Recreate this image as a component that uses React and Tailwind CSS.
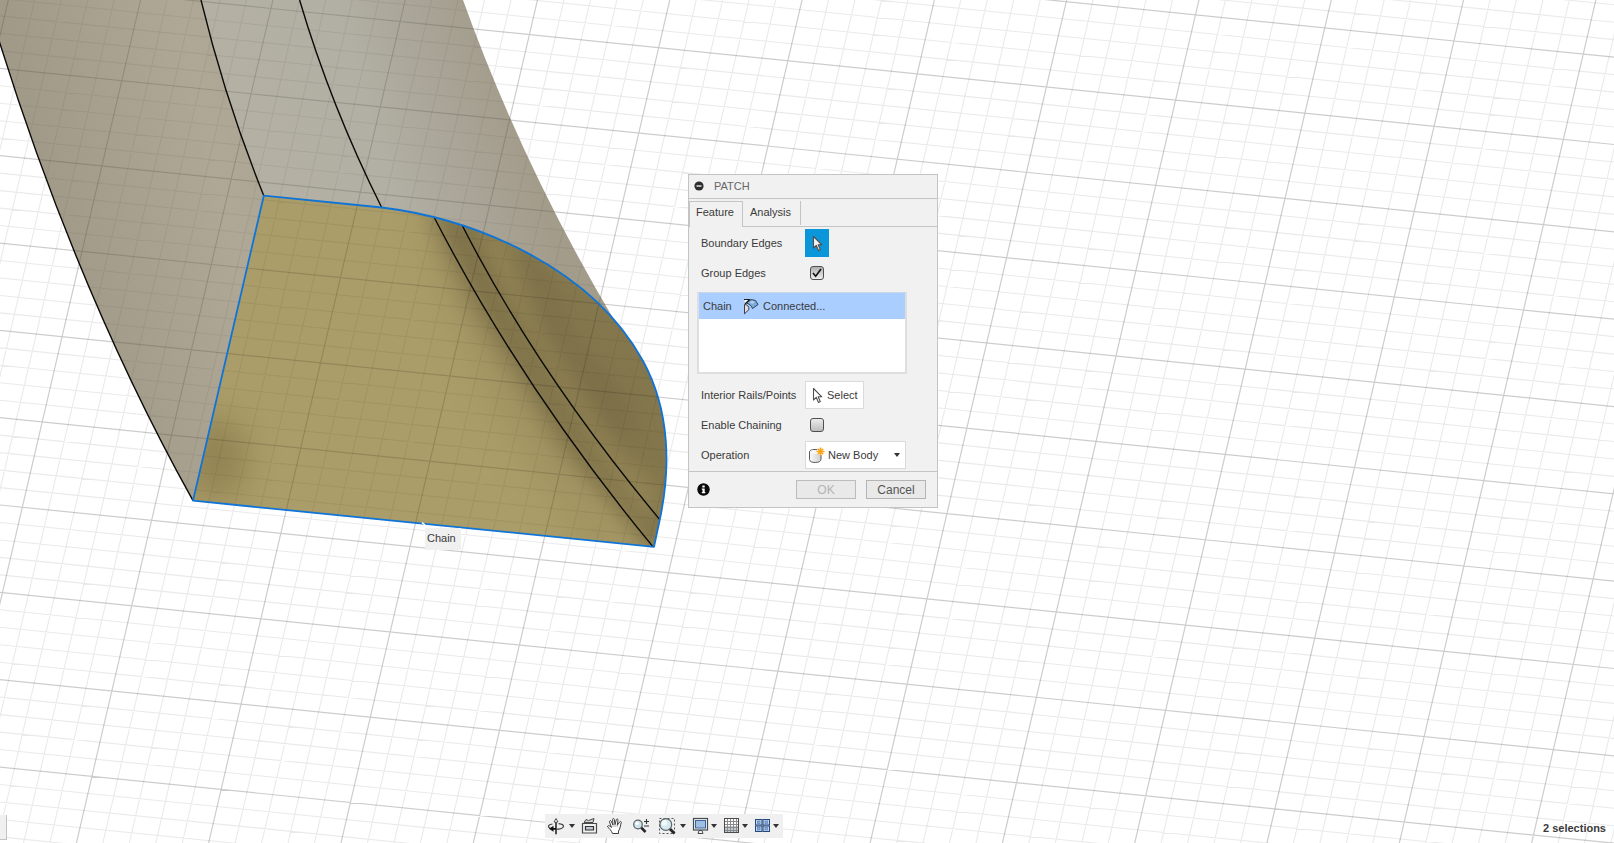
import React, { useState } from "react";

/* ---------- model geometry ---------- */

const silhouetteLeft = "M-12 4L0 43.6Q79 296 193 500.7";
const edgeInner = "M201 0Q225 99.500 263.800 195.700";
const edgeMiddle = "M299.600 0Q330.700 105.500 381.700 207.500";
const creaseA = "M434 217Q522 388 652.700 546.400";
const creaseB = "M462 225Q538 374 659.800 519.600";

const patchPath =
  "M263.800 195.700L381.700 207.500C471.700 218.500 590 265 642.900 360.700C671 412 670.300 470.600 659.800 519.600L654 546.800L193 500.700Z";
const sidePath = "M-12 0V4L0 43.600Q79 296 193 500.700L263.800 195.700Q225 99.500 201 0Z";
const topPath = "M201 0Q225 99.500 263.800 195.700L381.700 207.500L616 323.200Q523.500 168 463 0Z";

const ORIGIN = [131.7, 605.7];
const U = [129.24, 13.09];
const V = [-19.89, 85.32];

function gridPath(keep) {
  let d = "";
  const at = (m, n) =>
    `${(ORIGIN[0] + m * U[0] + n * V[0]).toFixed(1)} ${(ORIGIN[1] + m * U[1] + n * V[1]).toFixed(1)}`;
  for (let i = -60; i <= 100; i++) {
    if (!keep(i)) continue;
    d += `M${at(i / 5, -14)}L${at(i / 5, 8)}M${at(-6, i / 5)}L${at(16, i / 5)}`;
  }
  return d;
}
const majorGrid = gridPath((i) => i % 5 === 0);
const minorGrid = gridPath((i) => i % 5 !== 0);

function GridLines() {
  return (
    <>
      <path d={minorGrid} fill="none" stroke="#000" strokeOpacity="0.085" strokeWidth="1.1" />
      <path d={majorGrid} fill="none" stroke="#000" strokeOpacity="0.2" strokeWidth="1.2" />
    </>
  );
}

function Viewport() {
  return (
    <svg className="absolute inset-0 h-full w-full" viewBox="0 0 1614 843" preserveAspectRatio="xMinYMin slice" aria-hidden="true">
      <defs>
        <linearGradient id="side" gradientUnits="userSpaceOnUse" x1="30" y1="120" x2="240" y2="70">
          <stop offset="0" stopColor="#a29a89" />
          <stop offset="0.8" stopColor="#b0a897" />
          <stop offset="1" stopColor="#aea695" />
        </linearGradient>
        <linearGradient id="top" gradientUnits="userSpaceOnUse" x1="230" y1="90" x2="500" y2="10">
          <stop offset="0" stopColor="#b4b0a4" />
          <stop offset="0.45" stopColor="#b2afa4" />
          <stop offset="0.7" stopColor="#aaa598" />
          <stop offset="0.95" stopColor="#a39c8b" />
        </linearGradient>
        <filter id="soft" x="-40%" y="-40%" width="180%" height="180%">
          <feGaussianBlur stdDeviation="11" />
        </filter>
        <filter id="softer" x="-60%" y="-60%" width="220%" height="220%">
          <feGaussianBlur stdDeviation="16" />
        </filter>
        <clipPath id="patchClip">
          <path d={patchPath} />
        </clipPath>
        <clipPath id="modelClip">
          <path d={sidePath} />
          <path d={topPath} />
          <path d={patchPath} />
        </clipPath>
      </defs>
      <GridLines />
      <path d={sidePath} fill="url(#side)" />
      <path d={topPath} fill="url(#top)" />
      <g clipPath="url(#patchClip)">
        <rect x="180" y="180" width="500" height="380" fill="#ab9d69" />
        <path d="M425 205L480 215L690 330L690 520L655 560L640 540L560 455L470 310Z" fill="#84774e" filter="url(#soft)" />
        <path d="M425 200L470 305L560 450L640 560L600 570L500 420L430 270Z" fill="#9b8d5d" opacity="0.6" filter="url(#softer)" />
        <path d="M440 205L455 260L560 425L630 500L650 545L668 530L590 420L500 290L465 205Z" fill="#7b6f49" opacity="0.5" filter="url(#soft)" />
        <path d="M475 225L510 240L545 330L600 410L660 500L652 525L600 455L530 335Z" fill="#968859" opacity="0.95" filter="url(#soft)" />
        <path d="M505 235L530 250L570 340L625 400L640 470L600 430L550 345Z" fill="#746844" opacity="0.55" filter="url(#soft)" />
        <ellipse cx="216" cy="458" rx="32" ry="42" fill="#857849" opacity="0.65" filter="url(#softer)" />
      </g>
      <g clipPath="url(#modelClip)" opacity="0.7">
        <GridLines />
      </g>
      <g fill="none" stroke="#0a0a08" strokeWidth="1.4">
        <path d={silhouetteLeft} />
        <path d={edgeInner} />
        <path d={edgeMiddle} />
        <path d={creaseA} />
        <path d={creaseB} />
      </g>
      <path d={patchPath} fill="none" stroke="#0f74d6" strokeWidth="1.8" strokeLinejoin="round" />
      <path d="M422 522.500L425 525" stroke="#fff" strokeWidth="1.600" />
    </svg>
  );
}

/* ---------- icons ---------- */

function Cursor({ outline, fill }) {
  return (
    <svg width="11" height="17" viewBox="0 0 11 17" aria-hidden="true">
      <path d="M1.5 1.5V13L4.3 10.4L6.5 15.5L8.3 14.6L6.2 9.8H9.8Z" fill={fill} stroke={outline} strokeWidth="1.1" strokeLinejoin="round" />
    </svg>
  );
}

function ChainIcon() {
  return (
    <svg width="16" height="17" viewBox="0 0 16 17" aria-hidden="true">
      <path d="M3.500 5L8 1.500L12.500 2.500L15 6.500L9.500 10.500C8.500 8 6.500 6 3.500 5Z" fill="#7eaad6" stroke="#23415f" strokeWidth="1" strokeLinejoin="round" />
      <path d="M6.500 4.500L9 2.800L12 3.500L9.500 6Z" fill="#b4d0ea" />
      <path d="M1.500 6.500C4.500 6.500 6 8.500 6 11.500L1.500 15.800Z" fill="#dcdcdc" stroke="#3d3d3d" strokeWidth="1" strokeLinejoin="round" />
      <path d="M1.500 1.500H6.500L2 5.500Z" fill="#fff" />
      <path d="M1 1.500H7M6.500 1.500L2 6" fill="none" stroke="#1d1d1d" strokeWidth="1.1" />
    </svg>
  );
}

function BodyIcon() {
  return (
    <svg width="17" height="17" viewBox="0 0 17 17" aria-hidden="true">
      <defs>
        <linearGradient id="body" x1="0" y1="0" x2="1" y2="0">
          <stop offset="0" stopColor="#fafafa" />
          <stop offset="1" stopColor="#cfcfcf" />
        </linearGradient>
      </defs>
      <path d="M1.500 5Q1.500 2.500 7 2.500T13 5V12.500Q12.500 15.500 7.200 15.500T1.500 12.500Z" fill="url(#body)" stroke="#5a5a5a" strokeWidth="1" />
      <ellipse cx="7" cy="5" rx="4.800" ry="1.900" fill="#f7f7f7" />
      <circle cx="12.500" cy="4.500" r="3.600" fill="#fff" />
      <path d="M12.500 0.500V8.500M8.500 4.500H16.500M9.800 1.800L15.200 7.200M15.200 1.800L9.800 7.200" stroke="#f9a51a" strokeWidth="1.500" />
    </svg>
  );
}

function Caret() {
  return (
    <svg width="6" height="4" viewBox="0 0 6 4" aria-hidden="true">
      <path d="M0 0H6L3 4Z" fill="#333" />
    </svg>
  );
}

function OrbitIcon() {
  return (
    <svg width="18" height="18" viewBox="0 0 18 18" aria-hidden="true" fill="none" stroke="#3c3c3c" strokeWidth="1.2">
      <path d="M5.500 7C3 7.400 1.500 8.200 1.500 9.300C1.500 11 5 12.200 9 12.200C13 12.200 16.500 11 16.500 9.300C16.500 8 14.500 7 11.500 6.700" />
      <path d="M8.500 17V5H7L9 1.500L11 5H9.500V17Z" fill="#fff" strokeWidth="0.900" />
      <path d="M2 11.800L6.500 8.800V11H9V12.600H6.500V14.800Z" fill="#111" stroke="none" />
    </svg>
  );
}

function LookAtIcon() {
  return (
    <svg width="17" height="18" viewBox="0 0 17 18" aria-hidden="true" fill="none" stroke="#4a4a4a" strokeWidth="1.2">
      <path d="M3 5.500L5 2.500L7.500 3.500L13 1.500L12 5.500Z" fill="#d4d4d4" strokeWidth="1" />
      <path d="M1.500 6.500H15.500V16H1.500Z" fill="#f2f2f2" />
      <path d="M4.500 9.500H12.500V13H4.500Z" fill="#c3c9d1" stroke="#333" />
    </svg>
  );
}

function HandIcon() {
  return (
    <svg width="18" height="18" viewBox="0 0 18 18" aria-hidden="true">
      <path
        d="M6.500 16.500C5.500 14 3.500 11.500 1.500 9.800C1.500 8.500 3 8.300 4 9.200L5.500 10.600L3.500 4.800C3.300 3.500 4.800 3.100 5.300 4.300L7 8L6.600 2.500C6.600 1.200 8.200 1.200 8.400 2.500L9 7.700L10.300 2.700C10.700 1.500 12.200 1.800 12 3.100L11.300 8.300L13.700 4.900C14.500 4 15.700 4.800 15.200 5.900C14.200 8.300 14.500 11.500 12.500 14V16.500Z"
        fill="#fff"
        stroke="#3f3f3f"
        strokeWidth="1"
        strokeLinejoin="round"
      />
      <path d="M7 8V10M9 8V10M11.300 8.300V10" stroke="#9a9a9a" strokeWidth="0.800" />
    </svg>
  );
}

function ZoomIcon() {
  return (
    <svg width="18" height="18" viewBox="0 0 18 18" aria-hidden="true">
      <path d="M8.800 10.200L13.500 15" stroke="#262626" strokeWidth="2.600" />
      <circle cx="6" cy="7.500" r="4.300" fill="#cfe4ea" stroke="#5b6367" strokeWidth="1.200" />
      <circle cx="5" cy="6.300" r="1.800" fill="#fff" />
      <path d="M12 4.500H17M14.500 2V7M12 9H17" stroke="#333" strokeWidth="1.100" />
    </svg>
  );
}

function FitIcon() {
  return (
    <svg width="18" height="18" viewBox="0 0 18 18" aria-hidden="true">
      <rect x="1.500" y="1.500" width="15" height="15" fill="none" stroke="#555" strokeDasharray="2 2" />
      <path d="M11.500 11.500L16.500 16.500" stroke="#262626" strokeWidth="2.800" />
      <circle cx="7.800" cy="7.500" r="5.900" fill="#d5e9ee" stroke="#5b6367" strokeWidth="1.200" />
      <circle cx="6.500" cy="6" r="2.800" fill="#f6fbfc" />
    </svg>
  );
}

function DisplayIcon() {
  return (
    <svg width="17" height="18" viewBox="0 0 17 18" aria-hidden="true">
      <rect x="1.500" y="1.500" width="14" height="11.500" fill="#f4f4f4" stroke="#454a52" strokeWidth="1.200" />
      <rect x="3.500" y="3.500" width="10" height="7.500" fill="#9dbfe4" stroke="#3c6496" />
      <path d="M7 13.500L6 16.500H11L10 13.500Z" fill="#eee" stroke="#454a52" />
    </svg>
  );
}

function GridIcon() {
  return (
    <svg width="17" height="18" viewBox="0 0 17 18" aria-hidden="true">
      <rect x="1" y="1" width="15" height="15" fill="#fff" />
      <rect x="1" y="9" width="15" height="7" fill="#c3ccd6" />
      <path d="M4.500 1V16M7.500 1V16M10.500 1V16M13.500 1V16M1 4.500H16M1 7.500H16M1 10.500H16M1 13.500H16" stroke="#8a8a8a" strokeWidth="1" />
      <rect x="1.500" y="1.500" width="14" height="14" fill="none" stroke="#4a4a4a" />
    </svg>
  );
}

function ViewportsIcon() {
  return (
    <svg width="17" height="18" viewBox="0 0 17 18" aria-hidden="true" stroke="#274a7d">
      {[[1.5, 2.5], [9, 2.5], [1.5, 9], [9, 9]].map(([x, y]) => (
        <g key={`${x}-${y}`}>
          <rect x={x} y={y} width="6.500" height="5.500" fill="#c2d8f0" />
          <rect x={x + 2} y={y + 1.5} width="2.500" height="2.500" fill="#8fb2dc" stroke="#5f86ba" strokeWidth="0.800" />
        </g>
      ))}
    </svg>
  );
}

/* ---------- controls ---------- */

function Row({ label, htmlFor, children }) {
  return (
    <div className="flex h-[30px] items-center pl-3">
      <label htmlFor={htmlFor} className="w-[104px] shrink-0">
        {label}
      </label>
      {children}
    </div>
  );
}

function Check({ id, checked, onChange }) {
  return (
    <span className="ml-[5px] grid h-[14px] w-[14px]">
      <input
        id={id}
        type="checkbox"
        checked={checked}
        onChange={(e) => onChange(e.target.checked)}
        className="col-start-1 row-start-1 h-[14px] w-[14px] appearance-none rounded-[3px] border border-[#4f4f4f] bg-linear-to-b from-[#ececec] to-[#bdbdbd] checked:from-[#b0b0b0] checked:to-[#efefef]"
      />
      {checked && (
        <svg className="pointer-events-none col-start-1 row-start-1" width="14" height="14" viewBox="0 0 14 14" aria-hidden="true">
          <path d="M3 7L5.700 10.300L11 3" fill="none" stroke="#111" strokeWidth="1.600" />
        </svg>
      )}
    </span>
  );
}

function PatchDialog() {
  const [group, setGroup] = useState(true);
  const [chaining, setChaining] = useState(false);
  return (
    <section aria-label="Patch" className="absolute top-[174px] left-[688px] w-[250px] border border-[#c4c4c4] bg-[#f1f1f1]">
      <header className="flex h-6 items-center gap-2.5 border-b border-[#c4c4c4] pb-px pl-[5px]">
        <button type="button" aria-label="Collapse" className="flex">
          <svg width="10" height="10" viewBox="0 0 10 10" aria-hidden="true">
            <circle cx="5" cy="5" r="4.600" fill="#2d2d2d" />
            <path d="M2.500 5H7.500" stroke="#f1f1f1" strokeWidth="1.400" />
          </svg>
        </button>
        <h2 className="text-[#666]">PATCH</h2>
      </header>

      <div role="tablist" className="flex h-7 border-b border-[#c4c4c4] pt-0.5">
        <button type="button" role="tab" aria-selected="true" className="-mb-px w-[54px] border-x border-t border-[#c4c4c4] bg-[#f1f1f1] pr-0.5 pb-1.5">
          Feature
        </button>
        <button type="button" role="tab" aria-selected="false" className="mb-px w-[58px] border-r border-[#c4c4c4] pr-0.5 pb-0.5">
          Analysis
        </button>
      </div>

      <div className="pt-px">
        <Row label="Boundary Edges" htmlFor="boundary">
          <button id="boundary" type="button" className="flex h-7 w-6 items-center justify-center bg-[#0a96d8]">
            <Cursor outline="#5b4a40" fill="#f4f4f4" />
          </button>
        </Row>
        <Row label="Group Edges" htmlFor="group">
          <Check id="group" checked={group} onChange={setGroup} />
        </Row>

        <ul className="mt-1 mr-[30px] mb-1.5 ml-2 h-[82px] border-2 border-t border-[#dedede] border-t-[#c8d6e8] bg-white">
          <li className="flex h-[26px] items-center bg-[#aaceff] pl-1">
            <span className="w-10">Chain</span>
            <ChainIcon />
            <span className="pl-1">Connected...</span>
          </li>
        </ul>

        <Row label="Interior Rails/Points" htmlFor="rails">
          <button id="rails" type="button" className="flex h-7 w-[59px] items-center gap-1 border border-[#dadada] bg-white pl-1.5">
            <Cursor outline="#4f4f4f" fill="#fff" />
            Select
          </button>
        </Row>
        <Row label="Enable Chaining" htmlFor="chaining">
          <Check id="chaining" checked={chaining} onChange={setChaining} />
        </Row>
        <Row label="Operation" htmlFor="operation">
          <span className="grid h-7 w-[101px] items-center">
            <select id="operation" className="col-start-1 row-start-1 h-7 w-full appearance-none border border-[#dadada] bg-white pl-[22px]">
              <option>New Body</option>
            </select>
            <span className="pointer-events-none col-start-1 row-start-1 flex items-center justify-between pr-1.5 pl-[3px]">
              <BodyIcon />
              <Caret />
            </span>
          </span>
        </Row>
      </div>

      <footer className="mt-px flex h-9 items-center border-t border-[#c4c4c4] pr-[11px] pl-2">
        <svg width="13" height="13" viewBox="0 0 13 13" role="img" aria-label="Information">
          <circle cx="6.500" cy="6.500" r="6.200" fill="#0a0a0a" />
          <path d="M5.300 2.500H7.700V4.500H5.300ZM4.800 5.500H7.700V9H8.300V10.300H4.800V9H5.500V6.700H4.800Z" fill="#fff" />
        </svg>
        <div className="ml-auto flex gap-2.5 text-[12px] leading-4">
          <button type="button" disabled className="h-[19px] w-[60px] border border-[#bcbcbc] bg-[#e9e9e9] text-[#b4b4b4]">
            OK
          </button>
          <button type="button" className="h-[19px] w-[60px] border border-[#b4b4b4] bg-[#e9e9e9] text-[#555]">
            Cancel
          </button>
        </div>
      </footer>
    </section>
  );
}

function Tool({ label, icon, menu, className = "gap-0.5" }) {
  return (
    <button type="button" aria-label={label} className={`flex items-center ${className}`}>
      {icon}
      {menu && <Caret />}
    </button>
  );
}

export default function App() {
  return (
    <main className="relative h-screen overflow-hidden bg-white font-['Liberation_Sans',Arial,sans-serif] text-[11px] leading-4 text-[#3a3a3a]">
      <Viewport />

      <div role="tooltip" className="absolute top-[528px] left-[425px] h-[22px] w-9 bg-[#f0f0f0] pl-0.5 leading-5">
        Chain
      </div>

      <PatchDialog />

      <button type="button" aria-label="Expand timeline" className="absolute bottom-[3px] left-0 h-[25px] w-[7px] border-r border-b border-[#c2c2c2] bg-[#f0f0f0]" />

      <nav aria-label="Navigation" className="absolute bottom-[5px] left-[545px] flex h-6 items-center gap-1.5 bg-[#f0f0f0] pr-1 pl-0.5">
        <Tool label="Orbit" icon={<OrbitIcon />} menu className="gap-1" />
        <Tool label="Look at" icon={<LookAtIcon />} className="mr-0.5" />
        <Tool label="Pan" icon={<HandIcon />} className="mr-0.5" />
        <Tool label="Zoom" icon={<ZoomIcon />} className="mr-0.5" />
        <Tool label="Fit" icon={<FitIcon />} menu className="gap-1" />
        <Tool label="Display settings" icon={<DisplayIcon />} menu />
        <Tool label="Grid and snaps" icon={<GridIcon />} menu />
        <Tool label="Viewports" icon={<ViewportsIcon />} menu />
      </nav>

      <p className="absolute right-2 bottom-[7px] font-bold">2 selections</p>
    </main>
  );
}
